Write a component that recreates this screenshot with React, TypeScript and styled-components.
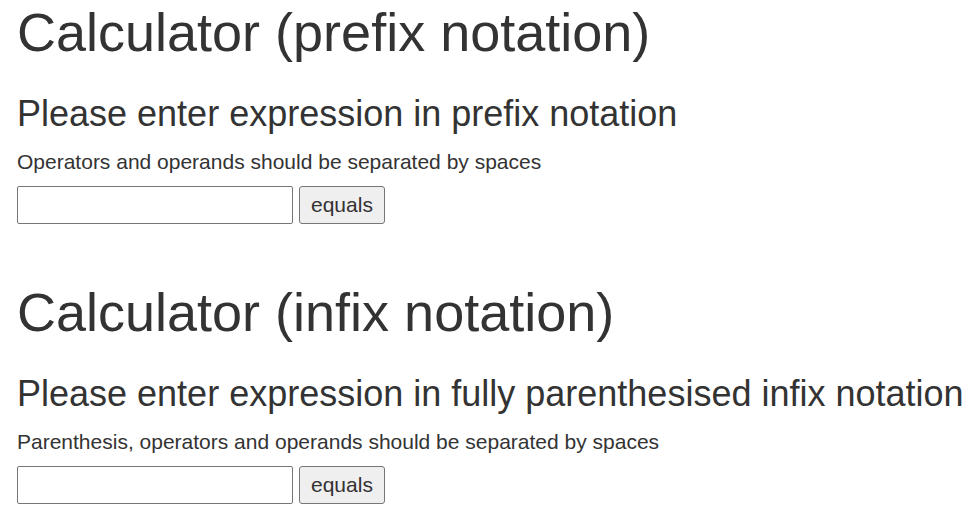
import React from "react";
import styled, { createGlobalStyle } from "styled-components";

const Global = createGlobalStyle`
  html, body { margin: 0; padding: 0; background: #fff; }
  body {
    font-family: "Liberation Sans", Arial, Helvetica, sans-serif;
    color: #333;
  }
`;

const Page = styled.div`
  padding: 3px 0 0 17px;
`;

const Section = styled.section`
  margin-bottom: 59px;
`;

const Title = styled.h1`
  margin: 0;
  font-size: 54px;
  line-height: 59.4px;
  font-weight: 400;
  color: #333;
`;

const Subtitle = styled.h3`
  margin: 32px 0 13px;
  font-size: 36px;
  line-height: 39.6px;
  font-weight: 400;
  color: #333;
`;

const Hint = styled.p`
  margin: 0 0 9px;
  font-size: 21px;
  line-height: 30px;
`;

const Row = styled.form`
  display: flex;
  align-items: flex-start;
  gap: 6px;
`;

const Field = styled.input`
  box-sizing: border-box;
  width: 276px;
  height: 38px;
  margin: 0;
  padding: 2px 3px;
  border: 1px solid #767676;
  border-radius: 2px;
  background: #fff;
  font-family: inherit;
  font-size: 21px;
`;

const Button = styled.button`
  box-sizing: border-box;
  height: 38px;
  margin: 0;
  padding: 0 11px;
  border: 1px solid #767676;
  border-radius: 3px;
  background: #efefef;
  color: #333;
  font-family: "Liberation Sans", Arial, sans-serif;
  font-size: 21px;
`;

type CalcProps = { title: string; subtitle: string; hint: string };

const Calculator = ({ title, subtitle, hint }: CalcProps) => (
  <Section>
    <Title>{title}</Title>
    <Subtitle>{subtitle}</Subtitle>
    <Hint>{hint}</Hint>
    <Row onSubmit={(e) => e.preventDefault()}>
      <Field type="text" />
      <Button type="submit">equals</Button>
    </Row>
  </Section>
);

export default function App() {
  return (
    <Page>
      <Global />
      <Calculator
        title="Calculator (prefix notation)"
        subtitle="Please enter expression in prefix notation"
        hint="Operators and operands should be separated by spaces"
      />
      <Calculator
        title="Calculator (infix notation)"
        subtitle="Please enter expression in fully parenthesised infix notation"
        hint="Parenthesis, operators and operands should be separated by spaces"
      />
    </Page>
  );
}
